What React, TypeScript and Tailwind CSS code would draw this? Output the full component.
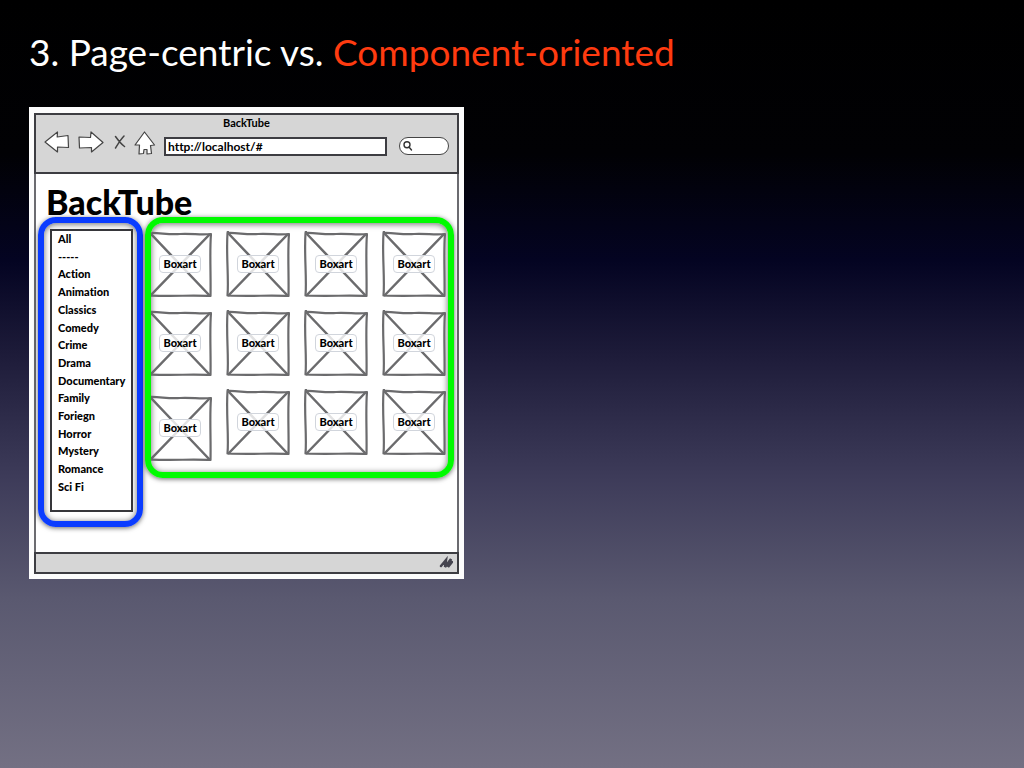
import React from "react";

const categories = [
  "All",
  "-----",
  "Action",
  "Animation",
  "Classics",
  "Comedy",
  "Crime",
  "Drama",
  "Documentary",
  "Family",
  "Foriegn",
  "Horror",
  "Mystery",
  "Romance",
  "Sci Fi",
];

const tiles = Array.from({ length: 12 }, (_, i) => i);

function ArrowLeft() {
  return (
    <svg width="26" height="22" viewBox="0 0 26 22" fill="#fff" stroke="#444" strokeWidth="1.2" strokeLinejoin="round" aria-hidden="true">
      <path d="M1 11 L13.500 1 L13.200 6 L24 4.500 L24.500 16.500 L13.500 16 L13.500 21 Z" />
    </svg>
  );
}

function ArrowRight() {
  return (
    <svg width="26" height="22" viewBox="0 0 26 22" fill="#fff" stroke="#444" strokeWidth="1.2" strokeLinejoin="round" aria-hidden="true">
      <path d="M25 11.500 L13 1 L12.500 6.500 L1 6 L1.500 17 L13.500 16.500 L13.500 21 Z" />
    </svg>
  );
}

function Cross() {
  return (
    <svg width="12" height="14" viewBox="0 0 12 14" fill="none" stroke="#444" strokeWidth="1.500" strokeLinecap="round" aria-hidden="true">
      <path d="M1.500 1.500 C4 5 7 9 10.500 11.500 M10 1 C7 4 4 9 1.500 13" />
    </svg>
  );
}

function Home() {
  return (
    <svg width="22" height="24" viewBox="0 0 22 24" fill="#fff" stroke="#444" strokeWidth="1.2" strokeLinejoin="round" aria-hidden="true">
      <path d="M10.500 1 L20.500 14 L16.500 14.500 L17.500 22.500 L13 23 L13 18.500 L10 18.500 L9.500 22.500 L5 23 L5.500 14 L1 14 Z" />
    </svg>
  );
}

function Boxart({ lowered }: { lowered: boolean }) {
  return (
    <div className={`grid h-16 w-16 place-items-center ${lowered ? "mt-1.5" : ""}`}>
      <svg className="col-start-1 row-start-1" width="64" height="66" viewBox="0 0 64 66" fill="none" stroke="#6b6b6d" strokeWidth="2.200" strokeLinejoin="round" aria-hidden="true">
        <path d="M2 0 L1.500 2 C12 1.500 20 4 32 3 C44 2.500 54 4 63 3 C61.500 20 63 44 62.500 65 C44 64 26 65.500 1.500 64.500 C3 48 0 24 1.500 2" />
        <path d="M2 2 L62 65 M62 3 L2 65" strokeWidth="2.500" />
      </svg>
      <span className="z-10 col-start-1 row-start-1 rounded-sm border border-gray-300 bg-white/80 px-[3px] text-[11px] leading-4 font-black text-black">
        Boxart
      </span>
    </div>
  );
}

export default function App() {
  return (
    <main className="min-h-screen bg-[linear-gradient(to_bottom,#000_0%,#010104_20%,#040422_34%,#1d1b39_46%,#3d3b59_62%,#5a5970_78%,#737083_100%)] px-[29px] pt-6 pb-8 font-['Lato',sans-serif] [font-variant-ligatures:none]">
      <h1 className="text-[37px] leading-14 text-white">
        3. Page-centric vs. <span className="text-[#ff3b10]">Component-oriented</span>
      </h1>

      <section className="mt-[27px] w-[435px] max-w-full bg-[#fcfcfc] px-[5px] pt-1.5 pb-[5px]" aria-label="BackTube wireframe">
        <header className="h-[61px] border-2 border-[#3d3d42] bg-[#d6d6d6] px-2 text-black">
          <p className="text-center text-[11px] leading-4 font-bold">BackTube</p>
          <div className="flex items-start">
            <button type="button" aria-label="Back"><ArrowLeft /></button>
            <button type="button" aria-label="Forward" className="ml-2"><ArrowRight /></button>
            <button type="button" aria-label="Stop" className="mt-1 ml-2.5"><Cross /></button>
            <button type="button" aria-label="Home" className="ml-2"><Home /></button>
            <input
              type="text"
              aria-label="Address"
              defaultValue="http://localhost/#"
              className="mt-1.5 ml-2 h-[19px] w-0 grow border-2 border-[#3d3d42] bg-white px-0.5 text-xs leading-4 font-bold outline-none"
            />
            <label className="mt-1.5 ml-3 flex h-[18px] w-[50px] items-center rounded-full border border-[#444] bg-white pl-0.5">
              <svg width="11" height="12" viewBox="0 0 11 12" fill="none" stroke="#333" strokeWidth="1.400" strokeLinecap="round" aria-hidden="true">
                <circle cx="5" cy="4.800" r="3" />
                <path d="M7 7 L9.500 10" />
              </svg>
              <input type="text" aria-label="Search" className="w-0 grow bg-transparent text-xs outline-none" />
            </label>
          </div>
        </header>

        <div className="border-x-2 border-[#6b6b70] bg-white pr-[3px] pb-[25px] pl-0.5">
          <h2 className="pt-3 pl-2 text-[34px] leading-8 font-black text-black">BackTube</h2>
          <div className="-mt-px flex items-start gap-0.5">
            <nav
              aria-label="Categories"
              className="relative w-[105px] shrink-0 rounded-[18px] border-[6px] border-[#0a3cff] pt-1.5 pr-1 pb-[9px] pl-1.5 shadow-[0_1px_5px_rgba(0,0,0,0.6),inset_0_1px_6px_rgba(0,0,0,0.6)]"
            >
              <ul className="flex h-[283px] flex-col justify-between border-2 border-[#36363a] bg-white pb-[15px] pl-1.5 text-[11px] leading-4 font-black text-black">
                {categories.map((name) => (
                  <li key={name}>{name}</li>
                ))}
              </ul>
            </nav>
            <div className="relative h-[261px] min-w-0 grow overflow-hidden rounded-[18px] border-[6px] border-[#00fb00] shadow-[0_1px_5px_rgba(0,0,0,0.6),inset_0_1px_6px_rgba(0,0,0,0.6)]">
              <div className="-ml-[3px] grid grid-cols-[repeat(4,64px)] gap-x-3.5 gap-y-[15px] pt-2">
                {tiles.map((i) => (
                  <Boxart key={i} lowered={i === 8} />
                ))}
              </div>
            </div>
          </div>
        </div>

        <footer className="flex h-[22px] items-center justify-end border-2 border-[#3d3d42] bg-[#d6d6d6] pr-1">
          <svg width="14" height="14" viewBox="0 0 14 14" fill="none" stroke="#45444f" strokeWidth="2.500" strokeLinecap="round" aria-hidden="true">
            <path d="M2 10 L7 4 L6 11 L12 3 L9 11 L13 6" />
          </svg>
        </footer>
      </section>
    </main>
  );
}
